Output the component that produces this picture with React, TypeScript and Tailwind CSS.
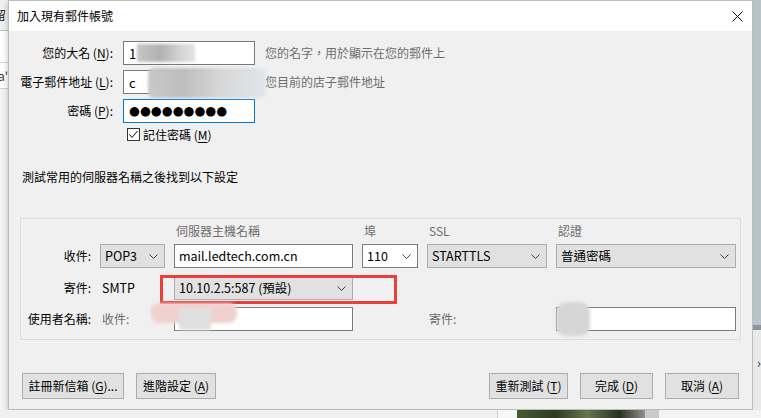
import React from "react";

const cjk = "font-['Noto_Sans_CJK_TC','Noto_Sans_CJK_JP',sans-serif]";

function Chevron() {
  return (
    <svg width="9" height="5" viewBox="0 0 9 5" className="shrink-0">
      <polyline points="0.5,0.5 4.5,4.5 8.5,0.5" fill="none" stroke="#404040" strokeWidth="1" />
    </svg>
  );
}

function Select({
  value,
  width,
  white,
}: {
  value: string;
  width: string;
  white?: boolean;
}) {
  return (
    <div
      className={`${width} h-[24px] border flex items-center justify-between pl-[4px] pr-[6px] text-[12.5px] text-black ${
        white ? "bg-white border-[#7a7a7a]" : "bg-[#e1e1e1] border-[#adadad]"
      }`}
    >
      <span>{value}</span>
      <Chevron />
    </div>
  );
}

function Button({ label, width }: { label: React.ReactNode; width: string }) {
  return (
    <div
      className={`${width} h-[26px] bg-[#e1e1e1] border border-[#adadad] flex items-center justify-center text-[12px] text-black`}
    >
      {label}
    </div>
  );
}

function Key({ k }: { k: string }) {
  return <span className="underline underline-offset-[2px] decoration-[1px]">{k}</span>;
}

function Blob({ className }: { className: string }) {
  return <div className={`absolute pointer-events-none blur-[1.5px] ${className}`} />;
}

export default function App() {
  const cols = "grid grid-cols-[70px_65px_179px_56px_120px_180px] gap-x-[9px] items-center";

  return (
    <div className={`w-[761px] h-[418px] bg-[#f0f0f0] flex flex-col overflow-hidden ${cjk} leading-none`}>
      <div className="flex h-[410px]">
        {/* background window on the left */}
        <div className="w-[8px] flex flex-col overflow-hidden">
          <div className="h-[30px] bg-[#f0f0f0] flex items-center overflow-hidden">
            <span className="-ml-[6px] text-[12px] text-[#222]">留</span>
          </div>
          <div className="h-px bg-[#bdbdbd]" />
          <div className="h-[31px] bg-white" />
          <div className="h-px bg-[#d4d4d4]" />
          <div className="h-[25px] bg-white flex items-center overflow-hidden">
            <span className="-ml-[2px] text-[12px] text-[#333]">a'</span>
          </div>
          <div className="h-px bg-[#d4d4d4]" />
          <div className="flex-1 bg-[#f4f4f4]" />
        </div>

        {/* dialog */}
        <div className="w-[745px] h-[410px] border border-[#b9c0b4] bg-[#f0f0f0] flex flex-col shadow-[0_2px_6px_rgba(0,0,0,0.25)] text-[12px] text-black">
          <div className="h-[30px] bg-white flex items-center justify-between pl-[8px] pr-[9px]">
            <span className="text-[12px]">加入現有郵件帳號</span>
            <svg width="11" height="11" viewBox="0 0 11 11">
              <path d="M0.5 0.5 L10.5 10.5 M10.5 0.5 L0.5 10.5" stroke="#111" strokeWidth="1" />
            </svg>
          </div>

          <div className="flex flex-col pt-[10px]">
            <div className="flex items-center h-[24px]">
              <div className="w-[104px] text-right">
                您的大名 (<Key k="N" />):
              </div>
              <div className="relative ml-[10px] w-[132px] h-[24px] bg-white border border-[#7a7a7a] flex items-center pl-[5px] text-[13px] overflow-hidden">
                <span>1</span>
                <Blob className="left-[13px] top-[2px] w-[58px] h-[18px] bg-[linear-gradient(90deg,#c6c6c6,#b0b0b0_40%,#cfcfcf_70%,#e4e4e4)]" />
              </div>
              <span className="ml-[10px] text-[#6d6d6d]">您的名字，用於顯示在您的郵件上</span>
            </div>

            <div className="flex items-center h-[24px] mt-[5px]">
              <div className="w-[104px] text-right">
                電子郵件地址 (<Key k="L" />):
              </div>
              <div className="relative ml-[10px] w-[132px] h-[24px] bg-white border border-[#7a7a7a] flex items-center pl-[5px] text-[13px]">
                <span>c</span>
                <Blob className="left-[24px] -top-[3px] w-[118px] h-[30px] rounded-[6px] bg-[linear-gradient(90deg,#c8c8c8,#bdbdbd_30%,#d6d6d6_60%,#e2e6ea)]" />
              </div>
              <span className="ml-[10px] text-[#6d6d6d]">您目前的店子郵件地址</span>
            </div>

            <div className="flex items-center h-[24px] mt-[5px]">
              <div className="w-[104px] text-right">
                密碼 (<Key k="P" />):
              </div>
              <div className="ml-[10px] w-[132px] h-[24px] bg-white border border-[#0078d7] flex items-center pl-[5px] font-['DejaVu_Sans',sans-serif] text-[12.5px] leading-none">
                ●●●●●●●●●
              </div>
            </div>

            <div className="flex items-center h-[13px] mt-[5px] ml-[118px]">
              <div className="w-[13px] h-[13px] border border-[#333] bg-white flex items-center justify-center">
                <svg width="11" height="11" viewBox="0 0 11 11">
                  <polyline points="1.5,5.5 4,8.5 9.5,2" fill="none" stroke="#111" strokeWidth="1" />
                </svg>
              </div>
              <span className="ml-[3px]">
                記住密碼 (<Key k="M" />)
              </span>
            </div>

            <div className="h-[18px] leading-[18px] mt-[27px] pl-[13px]">測試常用的伺服器名稱之後找到以下設定</div>

            <div className="mt-[32px] mx-[11px] h-[122px] border border-[#dcdcdc] flex flex-col pt-[3px]">
              <div className={`${cols} h-[18px] text-[#6d6d6d]`}>
                <span />
                <span />
                <span className="pl-[2px]">伺服器主機名稱</span>
                <span className="pl-[2px]">埠</span>
                <span className="pl-[2px]">SSL</span>
                <span className="pl-[2px]">認證</span>
              </div>

              <div className={`${cols} mt-[4px]`}>
                <span className="text-right">收件:</span>
                <Select value="POP3" width="w-[65px]" />
                <div className="h-[24px] bg-white border border-[#7a7a7a] flex items-center pl-[4px] text-[12.5px]">
                  mail.ledtech.com.cn
                </div>
                <Select value="110" width="w-[56px]" white />
                <Select value="STARTTLS" width="w-[120px]" />
                <Select value="普通密碼" width="w-[180px]" />
              </div>

              <div className={`${cols} mt-[8px] relative`}>
                <span className="text-right">寄件:</span>
                <span className="pl-[2px] text-[12.5px]">SMTP</span>
                <Select value="10.10.2.5:587 (預設)" width="w-[179px]" />
                <span />
                <span />
                <span />
                <div className="absolute left-[139px] -top-[1px] w-[237px] h-[29px] border-[3px] border-[#e8403d]" />
              </div>

              <div className={`${cols} mt-[7px]`}>
                <span className="text-right">使用者名稱:</span>
                <span className="pl-[2px] text-[#6d6d6d]">收件:</span>
                <div className="relative h-[24px] bg-white border border-[#7a7a7a]">
                  <Blob className="-left-[24px] -top-[5px] w-[86px] h-[20px] rounded-[8px] bg-[#f1d0d0]" />
                  <Blob className="left-[4px] top-[0px] w-[32px] h-[22px] bg-[#e0e0e0]" />
                </div>
                <span />
                <span className="pl-[2px] text-[#6d6d6d]">寄件:</span>
                <div className="relative h-[24px] bg-white border border-[#7a7a7a]">
                  <Blob className="-left-[1px] -top-[6px] w-[34px] h-[34px] rounded-[10px] bg-[#d6d6d6]" />
                </div>
              </div>
            </div>

            <div className="mt-[33px] flex items-center justify-between px-[13px]">
              <div className="flex gap-[12px]">
                <Button width="w-[102px]" label={<span>註冊新信箱 (<Key k="G" />)...</span>} />
                <Button width="w-[80px]" label={<span>進階設定 (<Key k="A" />)</span>} />
              </div>
              <div className="flex gap-[12px]">
                <Button width="w-[79px]" label={<span>重新測試 (<Key k="T" />)</span>} />
                <Button width="w-[73px]" label={<span>完成 (<Key k="D" />)</span>} />
                <Button width="w-[74px]" label={<span>取消 (<Key k="A" />)</span>} />
              </div>
            </div>
          </div>
        </div>

        {/* background on the right */}
        <div className="w-[8px] flex flex-col">
          <div className="h-[325px] bg-[#b7c2ca]" />
          <div className="h-[5px] bg-[#8e959a]" />
          <div className="flex-1 bg-[#e9e9e9] flex flex-col items-center pt-[26px] text-[13px] text-[#333]">
            <span className="ml-[4px]">›</span>
          </div>
        </div>
      </div>

      {/* strip of background below */}
      <div className="h-[8px] flex">
        <div className="w-[497px] bg-[#f0f0f0]" />
        <div className="w-[20px] bg-[#f7f7f7] border-l border-[#cfcfcf]" />
        <div className="w-[128px] bg-[linear-gradient(90deg,#4a5a34,#2f3a22_30%,#6a7450_55%,#2a2f24_80%,#909090)]" />
        <div className="w-[14px] bg-[#c9c9c9]" />
        <div className="flex-1 bg-[#f3f3f3]" />
      </div>
    </div>
  );
}
